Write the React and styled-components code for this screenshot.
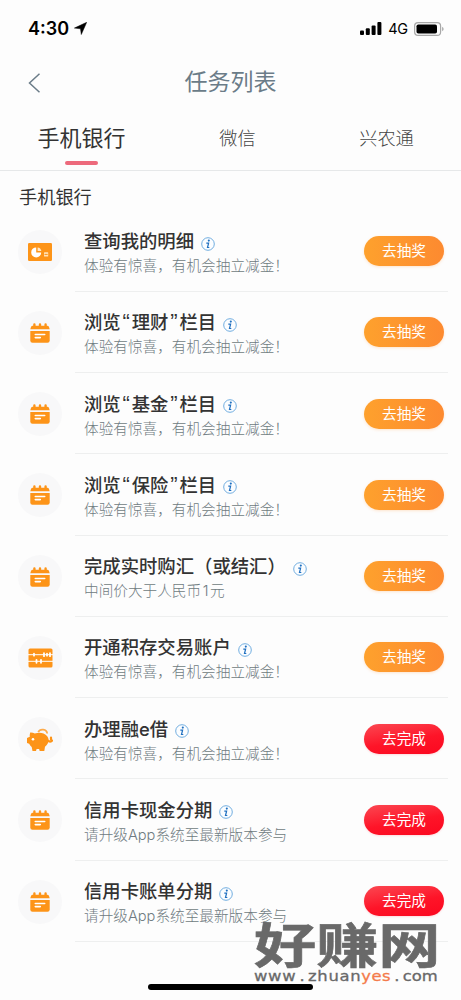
import React from 'react';
import styled, { createGlobalStyle, css } from 'styled-components';

const GlobalStyle = createGlobalStyle`
  * { box-sizing: border-box; }
  body {
    margin: 0;
    background: #fdfdfd;
    font-family: Inter, "Noto Sans CJK SC", sans-serif;
    color: #333;
  }
`;

const Screen = styled.div`
  position: relative;
  width: 461px;
  height: 1000px;
  overflow: hidden;
  display: flex;
  flex-direction: column;
  white-space: nowrap;
`;

const StatusBar = styled.header`
  display: flex;
  align-items: center;
  height: 56px;
  padding: 1px 17px 0 28px;
  color: #000;
`;

const Clock = styled.span`
  font-size: 18px;
  font-weight: 600;
  line-height: 20px;
  margin-right: 5px;
`;

const StatusIcons = styled.div`
  display: flex;
  align-items: center;
  margin-left: auto;
`;

const Network = styled.span`
  font-size: 14.5px;
  font-weight: 400;
  line-height: 18px;
  letter-spacing: -0.2px;
  margin: 1px 6px 0 6px;
`;

const NavBar = styled.nav`
  display: grid;
  grid-template-columns: 60px 1fr 60px;
  align-items: center;
  height: 52px;
  color: #6b7c88;
`;

const BackButton = styled.button`
  display: flex;
  padding: 1px 0 0 28px;
  border: 0;
  background: none;
  color: inherit;
`;

const PageTitle = styled.h1`
  margin: 0;
  font-size: 23px;
  font-weight: 400;
  line-height: 34px;
  text-align: center;
`;

const Tabs = styled.div`
  display: grid;
  grid-template-columns: 163px 149px 149px;
  height: 63px;
  border-bottom: 1px solid #e6e8e9;
`;

const Tab = styled.div`
  display: flex;
  flex-direction: column;
  align-items: center;
  padding-top: 14px;
  font-size: 18.2px;
  font-weight: 300;
  line-height: 32px;
  color: #444;

  ${({ $active }) =>
    $active &&
    css`
      font-size: 22px;
      font-weight: 400;
      color: #333;

      &::after {
        content: '';
        width: 33px;
        height: 4px;
        margin-top: 7px;
        border-radius: 2px;
        background: #ed6a7c;
      }
    `}
`;

const SectionTitle = styled.h2`
  height: 39.5px;
  margin: 0;
  padding: 11px 0 0 19px;
  font-size: 18.2px;
  font-weight: 400;
  line-height: 30px;
`;

const TaskList = styled.ul`
  margin: 0;
  padding: 0;
  list-style: none;
`;

const TaskRow = styled.li`
  display: flex;
  height: 81.25px;
  padding: 0 13px 0 18px;
`;

const IconDisc = styled.div`
  display: flex;
  align-items: center;
  justify-content: center;
  flex: none;
  width: 44px;
  height: 44px;
  margin: 19px 13px 0 0;
  border-radius: 50%;
  background: #f8f8f9;
`;

const TaskBody = styled.div`
  display: flex;
  flex: 1;
  justify-content: space-between;
  padding: 0 4px 0 9px;
  border-bottom: 1.5px solid #eeefef;
`;

const TaskText = styled.div`
  display: flex;
  flex-direction: column;
  padding-top: 16.5px;
`;

const TaskName = styled.div`
  display: flex;
  align-items: center;
  height: 28px;
  font-size: 18.35px;
  font-weight: 500;
  line-height: 28px;

  svg { margin: 5px 0 0 7px; }
`;

const Quote = styled.span`
  width: 11px;
  font-family: "Liberation Sans", sans-serif;
  font-size: 22px;
  text-align: center;
`;

const TaskHint = styled.div`
  font-size: 14.65px;
  font-weight: 300;
  line-height: 22px;
  color: #6f7b81;
`;

const Digit = styled.span`
  margin: 0 1.5px;
`;

const ActionButton = styled.button`
  width: 80px;
  height: 30px;
  margin-top: 25.5px;
  padding: 0;
  border: 0;
  border-radius: 15px;
  font-family: inherit;
  font-size: 14.65px;
  font-weight: 400;
  line-height: 30px;
  color: #fff;
  background: ${({ $tone }) =>
    $tone === 'red'
      ? 'linear-gradient(170deg, #fb4852 0%, #fe1428 55%, #fb0820 100%)'
      : 'linear-gradient(90deg, #fea12d, #fd8a30)'};
  box-shadow: ${({ $tone }) =>
    $tone === 'red' ? '0 1px 2px rgba(254, 30, 50, 0.15)' : '0 1px 3px rgba(253, 140, 40, 0.22)'};
`;

const HomeIndicator = styled.div`
  position: absolute;
  left: 148px;
  top: 984px;
  width: 165px;
  height: 6px;
  border-radius: 3px;
  background: #000;
`;

const Watermark = styled.div`
  position: absolute;
  left: 254px;
  top: 915px;
  color: #696969;
`;

const WatermarkName = styled.div`
  width: 144px;
  height: 53px;
  font-family: "Noto Sans CJK SC", sans-serif;
  font-size: 48px;
  font-weight: 700;
  line-height: 54px;
  transform: scaleX(1.295);
  transform-origin: left;
  -webkit-text-stroke: 0.6px #696969;
`;

const WatermarkSite = styled.div`
  display: flex;
  height: 16px;
  font-family: "DejaVu Sans", sans-serif;
  font-size: 14px;
  line-height: 16px;
  transform: scaleX(1.17);
  transform-origin: left;
  -webkit-text-stroke: 0.3px currentColor;

  b {
    font-weight: 400;
    letter-spacing: 0.6px;
  }
  em {
    font-style: normal;
    letter-spacing: 0.4px;
    color: #f47b4b;
  }
  i {
    width: 10px;
    font-style: normal;
    text-align: center;
  }
`;

const ORANGE = '#fd9418';

const CalendarIcon = () => (
  <svg width="20" height="20" viewBox="0 0 20 20" fill={ORANGE}>
    <path d="M0.300 6.300 1 4Q1.400 2.800 2.800 2.800H3.200V1.500a1.200 1.200 0 0 1 2.400 0v1.300h3.200V1.500a1.200 1.200 0 0 1 2.400 0v1.300h3.200V1.500a1.200 1.200 0 0 1 2.400 0v1.300h.4Q18.600 2.800 19 4l.7 2.300z" />
    <path d="M0.300 8h19.400v9.500q0 2.200-2.200 2.200h-15Q.3 19.700.3 17.500z" />
    <path d="M5.300 11.500h9.400M5.300 14.600h5" stroke="#fff" strokeWidth="1.600" strokeLinecap="round" />
  </svg>
);

const ReportIcon = () => (
  <svg width="24" height="18" viewBox="0 0 24 18">
    <rect width="24" height="18" rx="1.2" fill={ORANGE} />
    <path d="M8.200 9.400V4.400a5 5 0 1 0 5 5z" fill="#fff" />
    <path d="M9.600 8V4.400q3.200.3 3.700 3.600z" fill="#ffe8c8" />
    <rect x="16" y="9.300" width="4.200" height="4.200" rx=".5" fill="#ffe2b8" />
    <path d="M16.500 11.400h3.200" stroke={ORANGE} strokeWidth="1" />
  </svg>
);

const AbacusIcon = () => (
  <svg width="25" height="20" viewBox="0 0 25 20">
    <rect x="0.500" y="0.500" width="24" height="19" rx="1.500" fill={ORANGE} />
    <path d="M0 6.700h25M0 13.300h25" stroke="#fff" strokeWidth="1" />
    <path d="M6 5.700v2M16 5.200v3M19 5.700v2M22 5.200v3M8.500 11.800v3M13 11.800v3" stroke="#fff" strokeWidth="1.800" strokeLinecap="round" />
  </svg>
);

const PiggyIcon = () => (
  <svg width="26" height="25" viewBox="0 0 26 25">
    <path d="M11.200 5.200a4.700 4.300 0 0 1 9 1.300" fill="none" stroke="#fdab4b" strokeWidth="1.700" />
    <path d="M3.200 5.600Q6 5.500 7.800 6.600 12.500 5.200 16.500 6.500 21.400 8.600 21.600 13 21.400 17 18 19.800L17.300 24h-4.600l-.6-1.900H9.600L9 24H5.500L4.700 20Q3 18.600 2.200 16.700L0 16v-5l2.800-1.200Q2.600 7.500 3.200 5.600z" fill={ORANGE} />
    <path d="M21 13.800q2.800 1.600 4.200-.2M24 10.500v2" fill="none" stroke={ORANGE} strokeWidth="2.200" strokeLinecap="round" />
    <circle cx="6" cy="12.300" r="1.300" fill="#fff" />
  </svg>
);

const InfoIcon = () => (
  <svg width="14" height="14" viewBox="0 0 14 14">
    <circle cx="7" cy="7" r="6.300" fill="#fbfdff" stroke="#62a5dd" strokeWidth="0.900" />
    <circle cx="7.800" cy="3.600" r="1.050" fill="#1e6fc0" />
    <path d="M5.300 6.200H7.600L6.500 10.500H8.300" fill="none" stroke="#1e6fc0" strokeWidth="1.200" />
  </svg>
);

const LocationIcon = () => (
  <svg width="13" height="13" viewBox="0 0 13 13">
    <path d="M12.700.3 7.300 12.500 6.500 6.800.4 6.100z" fill="#000" stroke="#000" strokeWidth=".5" strokeLinejoin="round" />
  </svg>
);

const SignalIcon = () => (
  <svg width="22" height="14" viewBox="0 0 22 14">
    <rect x="0" y="8.500" width="4" height="4.500" rx="1" />
    <rect x="5.800" y="6.300" width="4" height="6.700" rx="1" />
    <rect x="11.600" y="3.500" width="4" height="9.500" rx="1" />
    <rect x="17.400" y="0" width="4" height="13" rx="1" />
  </svg>
);

const BatteryIcon = () => (
  <svg width="30" height="14" viewBox="0 0 30 14">
    <rect x=".6" y=".6" width="26" height="12.800" rx="3.500" fill="none" stroke="#a8a8a8" strokeWidth="1.200" />
    <rect x="2.500" y="2.500" width="20.500" height="9" rx="1.800" />
    <path d="M28.200 4.800q1.400.8 1.400 2.200t-1.400 2.200z" fill="#a0a0a0" />
  </svg>
);

const icons = { report: ReportIcon, calendar: CalendarIcon, abacus: AbacusIcon, piggy: PiggyIcon };

const PRIZE_HINT = '体验有惊喜，有机会抽立减金！';
const UPGRADE_HINT = '请升级App系统至最新版本参与';

const quoted = (word) => (
  <>浏览<Quote>“</Quote>{word}<Quote>”</Quote>栏目</>
);

const tasks = [
  { id: 'detail', icon: 'report', name: '查询我的明细', hint: PRIZE_HINT },
  { id: 'wealth', icon: 'calendar', name: quoted('理财'), hint: PRIZE_HINT },
  { id: 'fund', icon: 'calendar', name: quoted('基金'), hint: PRIZE_HINT },
  { id: 'insurance', icon: 'calendar', name: quoted('保险'), hint: PRIZE_HINT },
  { id: 'exchange', icon: 'calendar', name: '完成实时购汇（或结汇）', hint: <>中间价大于人民币<Digit>1</Digit>元</> },
  { id: 'deposit', icon: 'abacus', name: '开通积存交易账户', hint: PRIZE_HINT },
  { id: 'loan', icon: 'piggy', name: '办理融e借', hint: PRIZE_HINT, pending: true },
  { id: 'cash', icon: 'calendar', name: '信用卡现金分期', hint: UPGRADE_HINT, pending: true },
  { id: 'bill', icon: 'calendar', name: '信用卡账单分期', hint: UPGRADE_HINT, pending: true },
];

function Task({ icon, name, hint, pending }) {
  const Icon = icons[icon];
  return (
    <TaskRow>
      <IconDisc><Icon /></IconDisc>
      <TaskBody>
        <TaskText>
          <TaskName>{name}<InfoIcon /></TaskName>
          <TaskHint>{hint}</TaskHint>
        </TaskText>
        <ActionButton $tone={pending ? 'red' : 'orange'}>{pending ? '去完成' : '去抽奖'}</ActionButton>
      </TaskBody>
    </TaskRow>
  );
}

export default function App() {
  return (
    <Screen>
      <GlobalStyle />
      <StatusBar>
        <Clock>4:30</Clock>
        <LocationIcon />
        <StatusIcons>
          <SignalIcon />
          <Network>4G</Network>
          <BatteryIcon />
        </StatusIcons>
      </StatusBar>
      <NavBar>
        <BackButton aria-label="返回">
          <svg width="13" height="20" viewBox="0 0 13 20" fill="none" stroke="currentColor" strokeWidth="1.500">
            <path d="M11.500 .8 1.500 10l10 9.200" />
          </svg>
        </BackButton>
        <PageTitle>任务列表</PageTitle>
      </NavBar>
      <Tabs>
        <Tab $active>手机银行</Tab>
        <Tab>微信</Tab>
        <Tab>兴农通</Tab>
      </Tabs>
      <SectionTitle>手机银行</SectionTitle>
      <TaskList>
        {tasks.map(({ id, ...task }) => <Task key={id} {...task} />)}
      </TaskList>
      <HomeIndicator />
      <Watermark>
        <WatermarkName>好赚网</WatermarkName>
        <WatermarkSite><b>www</b><i>.</i><b>zhuan</b><em>yes</em><i>.</i>com</WatermarkSite>
      </Watermark>
    </Screen>
  );
}
